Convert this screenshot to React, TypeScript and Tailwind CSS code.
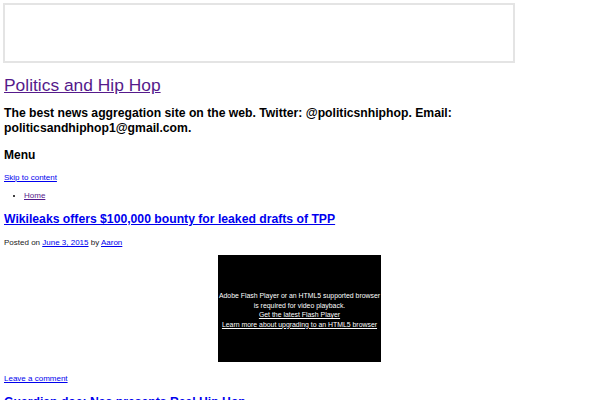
export default function App() {
  return (
    <div className="w-[600px] h-[400px] overflow-hidden bg-white font-['Liberation_Sans',Arial,sans-serif] text-black">
      <div className="ml-[3px] mt-[3px] w-[512px] h-[60px] border-2 border-[#e4e4e4]" />
      <div className="pl-[4px]">
        <div className="mt-[11px] text-[17.4px] leading-[22px]">
          <a href="#" className="text-[#551a8b] underline">Politics and Hip Hop</a>
        </div>
        <div className="mt-[10px] text-[12.2px] leading-[15px] font-bold w-[460px]">
          The best news aggregation site on the web. Twitter: @politicsnhiphop. Email: politicsandhiphop1@gmail.com.
        </div>
        <div className="mt-[12px] text-[12px] leading-[15px] font-bold">Menu</div>
        <div className="mt-[9px] text-[8px] leading-[11px]">
          <a href="#" className="text-[#0000ee] underline">Skip to content</a>
        </div>
        <ul className="mt-[7px] ml-[20px] list-disc text-[8px] leading-[11px]">
          <li><a href="#" className="text-[#551a8b] underline">Home</a></li>
        </ul>
        <div className="mt-[10px] text-[12.2px] leading-[17px] font-bold">
          <a href="#" className="text-[#0000ee] underline">Wikileaks offers $100,000 bounty for leaked drafts of TPP</a>
        </div>
        <div className="mt-[9px] text-[8px] leading-[11px] text-[#222]">
          Posted on <a href="#" className="text-[#0000ee] underline">June 3, 2015</a> by <a href="#" className="text-[#0000ee] underline">Aaron</a>
        </div>
        <div className="mt-[7px] ml-[214px] w-[163px] h-[107px] pt-[3px] bg-black flex flex-col items-center justify-center text-white text-[6.9px] leading-[9.5px] text-center whitespace-nowrap">
          <div>Adobe Flash Player or an HTML5 supported browser</div>
          <div>is required for video playback.</div>
          <a href="#" className="underline">Get the latest Flash Player</a>
          <a href="#" className="underline">Learn more about upgrading to an HTML5 browser</a>
        </div>
        <div className="mt-[11px] text-[8px] leading-[11px]">
          <a href="#" className="text-[#0000ee] underline">Leave a comment</a>
        </div>
        <div className="mt-[10px] text-[12.2px] leading-[17px] font-bold">
          <a href="#" className="text-[#0000ee] underline">Guardian doc: Nas presents Real Hip Hop</a>
        </div>
      </div>
    </div>
  );
}
